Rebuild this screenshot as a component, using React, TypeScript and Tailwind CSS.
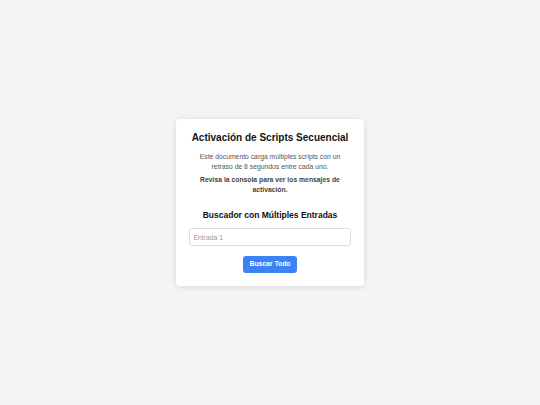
export default function App() {
  return (
    <div
      className="min-h-screen bg-[#f3f4f6] flex items-center justify-center"
      style={{ fontFamily: '"Liberation Sans", Arial, sans-serif' }}
    >
      <div className="w-[188px] bg-white rounded-[4px] shadow-[0_1px_6px_rgba(0,0,0,0.12)] px-[13px] pt-[13px] pb-[13px] text-center">
        <h1 className="text-[10px] leading-[12px] font-bold text-[#111]">
          Activación de Scripts Secuencial
        </h1>
        <p className="mt-[8px] text-[6.8px] leading-[10.5px] text-[#555]">
          Este documento carga múltiples scripts con un retraso de 8 segundos entre cada uno.
        </p>
        <p className="mt-[2.5px] text-[6.8px] leading-[10px] font-bold text-[#444]">
          Revisa la consola para ver los mensajes de activación.
        </p>
        <h2 className="mt-[14.5px] text-[8.5px] leading-[11px] font-bold text-[#111]">
          Buscador con Múltiples Entradas
        </h2>
        <input
          type="text"
          placeholder="Entrada 1"
          className="mt-[7.5px] block w-full h-[18px] px-[3.5px] border border-[#dddddd] rounded-[3px] text-[6.8px] text-[#333] placeholder:text-[#999] outline-none"
        />
        <button className="mt-[10px] h-[17px] w-[54px] rounded-[3px] bg-[#3b82f6] text-white text-[6.8px] font-bold">
          Buscar Todo
        </button>
      </div>
    </div>
  );
}
